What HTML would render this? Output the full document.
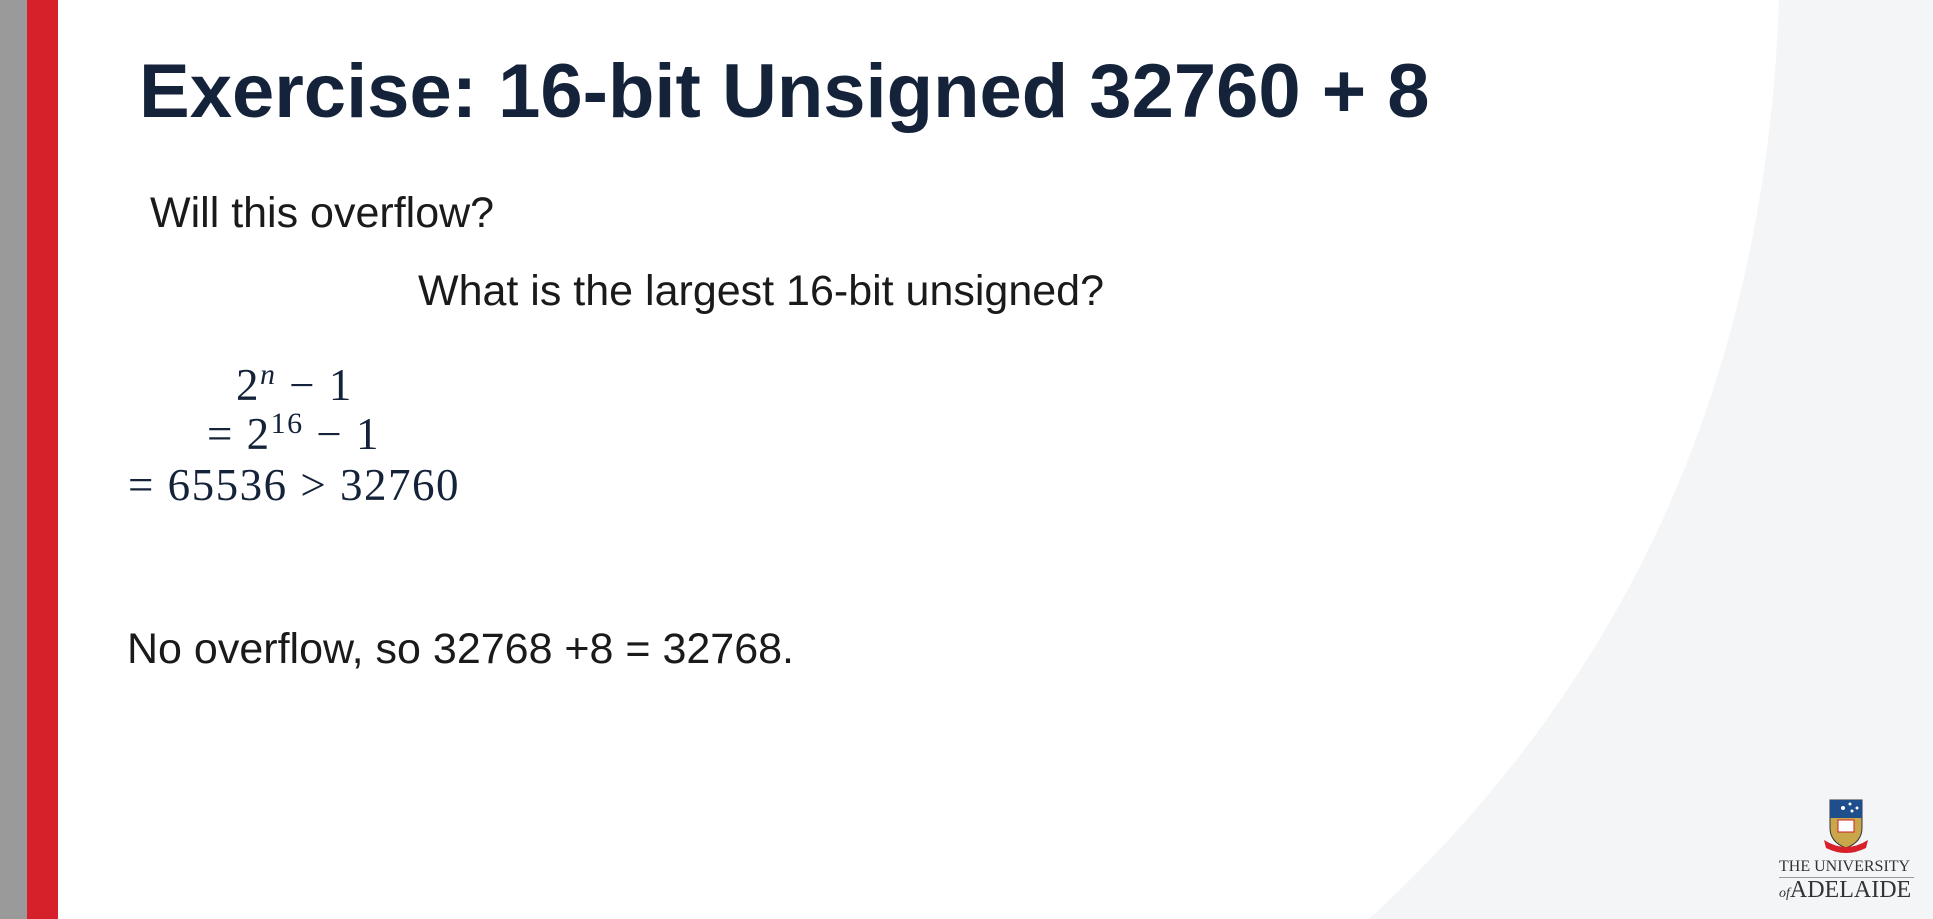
<!DOCTYPE html>
<html><head><meta charset="utf-8"><style>
html,body{margin:0;padding:0}
body{width:1933px;height:919px;position:relative;overflow:hidden;background:#f4f5f7;font-family:"Liberation Sans",Arial,sans-serif}
.t{position:absolute;white-space:nowrap;line-height:1}
.m{font-family:"Liberation Serif",serif;color:#14233a;font-size:45px;letter-spacing:1.5px}
</style></head><body>
<svg style="position:absolute;left:0;top:0" width="1933" height="919">
<path d="M0 0 H1779 Q1760 560 1369 919 H0 Z" fill="#ffffff"/>
<rect x="0" y="0" width="27" height="919" fill="#9a9a9a"/>
<rect x="27" y="0" width="31" height="919" fill="#d6202a"/>
</svg>
<div class="t" style="left:139px;top:54px;font-size:76px;font-weight:bold;color:#14233a">Exercise: 16-bit Unsigned 32760 + 8</div>
<div class="t" style="left:150px;top:192px;font-size:43px;color:#1a1a1a">Will this overflow?</div>
<div class="t" style="left:418px;top:270px;font-size:43px;color:#1a1a1a">What is the largest 16-bit unsigned?</div>
<div class="t m" style="left:236px;top:360px">2<sup style="font-style:italic;font-size:30px;vertical-align:16px">n</sup> − 1</div>
<div class="t m" style="left:207px;top:409px">= 2<sup style="font-size:30px;vertical-align:16px">16</sup> − 1</div>
<div class="t m" style="left:128px;top:463px">= 65536 &gt; 32760</div>
<div class="t" style="left:127px;top:628px;font-size:43px;color:#1a1a1a">No overflow, so 32768 +8 = 32768.</div>
<svg style="position:absolute;left:1822px;top:798px" width="50" height="60" viewBox="0 0 50 60">
<path d="M8 2 H40 V30 Q40 44 24 50 Q8 44 8 30 Z" fill="#c9a64a" stroke="#333" stroke-width="1"/>
<path d="M8 2 H40 V20 H8 Z" fill="#1f4e8c"/>
<circle cx="21" cy="10" r="2" fill="#fff"/><circle cx="28" cy="6" r="1.5" fill="#fff"/><circle cx="30" cy="13" r="1.5" fill="#fff"/><circle cx="35" cy="10" r="1.5" fill="#fff"/>
<rect x="16" y="22" width="16" height="12" fill="#fff" stroke="#c22" stroke-width="1"/>
<path d="M2 42 Q24 56 46 42 L44 50 Q24 60 4 50 Z" fill="#d6202a"/>
</svg>
<div class="t" style="left:1779px;top:859px;font-family:'Liberation Serif',serif;font-size:16px;color:#333">THE UNIVERSITY</div>
<div style="position:absolute;left:1779px;top:877px;width:135px;height:1px;background:#999"></div>
<div class="t" style="left:1779px;top:878px;font-family:'Liberation Serif',serif;font-size:24px;color:#333"><i style="font-size:14px">of</i>ADELAIDE</div>
</body></html>
